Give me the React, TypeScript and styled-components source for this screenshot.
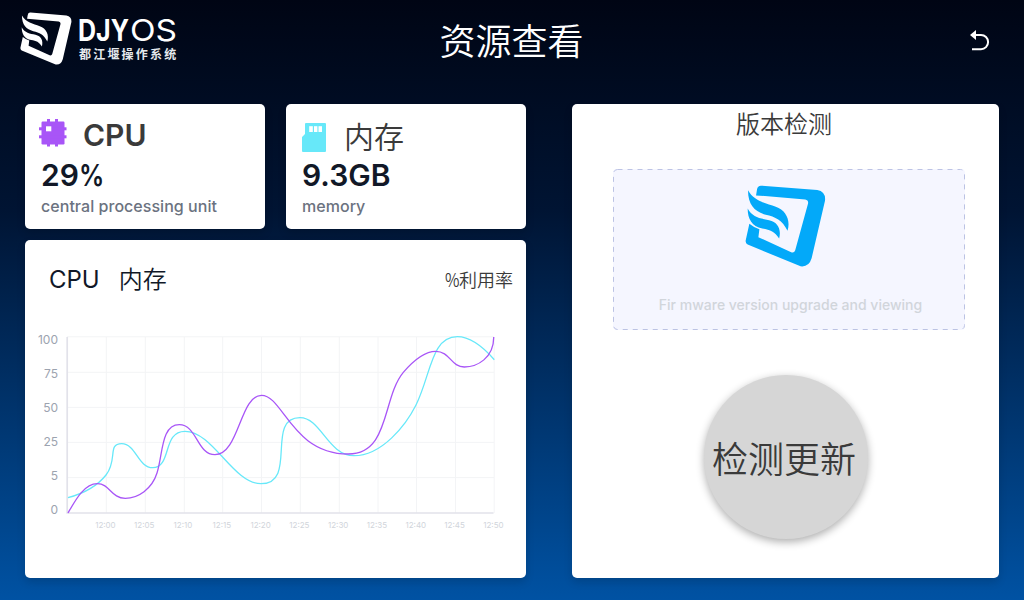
import React from "react";
import styled, { createGlobalStyle } from "styled-components";

const GlobalStyle = createGlobalStyle`
  * { box-sizing: border-box; }
  html, body { margin: 0; padding: 0; }
  body {
    width: 1024px;
    height: 600px;
    overflow: hidden;
    font-family: Inter, "Noto Sans CJK SC", sans-serif;
  }
`;

const Screen = styled.div`
  display: flex;
  flex-direction: column;
  width: 1024px;
  height: 600px;
  padding: 0 25px 22px;
  background: linear-gradient(180deg, #000514 0%, #001433 35%, #0052a3 100%);
`;

const Header = styled.header`
  display: grid;
  grid-template-columns: 1fr auto 1fr;
  align-items: start;
  height: 104px;
  flex: none;
`;

const Brand = styled.div`
  display: flex;
  align-items: flex-start;
  gap: 7px;
  margin-left: -5px;
  padding-top: 12px;
`;

const BrandText = styled.div`
  display: flex;
  flex-direction: column;
`;

const Wordmark = styled.svg`
  display: block;
  overflow: visible;
`;

const BrandSub = styled.span`
  margin-top: 2px;
  font: 700 12px/16px "Noto Sans CJK SC", sans-serif;
  letter-spacing: 2.2px;
  color: #e6e9ee;
  white-space: nowrap;
`;

const Title = styled.h1`
  margin: 0 1px 0 0;
  padding-top: 13px;
  font: 350 36px/52px "Noto Sans CJK SC", sans-serif;
  color: #fff;
`;

const BackButton = styled.button`
  justify-self: end;
  display: flex;
  margin: 28px 8px 0 0;
  padding: 0;
  border: 0;
  background: none;
`;

const Content = styled.main`
  display: flex;
  flex: 1;
  gap: 46px;
`;

const LeftColumn = styled.div`
  display: flex;
  flex-direction: column;
  gap: 11px;
  width: 501px;
`;

const StatRow = styled.div`
  display: flex;
  gap: 21px;
`;

const Card = styled.section`
  background: #fff;
  border-radius: 5px;
  box-shadow: 0 4px 8px rgba(0, 0, 0, 0.14);
`;

const StatCard = styled(Card)`
  width: 240px;
  height: 125px;
  padding: 13px 0 0 16px;
`;

const StatHead = styled.div<{ $gap: number; $shift: number }>`
  display: flex;
  align-items: flex-start;
  gap: ${(p) => p.$gap}px;
  height: 40px;
  margin-left: ${(p) => p.$shift}px;
`;

const StatIcon = styled.span<{ $top: number }>`
  display: flex;
  margin-top: ${(p) => p.$top}px;
`;

const StatName = styled.h2<{ $cjk?: boolean }>`
  margin: 0;
  font-size: 30px;
  line-height: ${(p) => (p.$cjk ? 40 : 36)}px;
  font-weight: ${(p) => (p.$cjk ? 350 : 600)};
  color: #3a3a3a;
`;

const StatValue = styled.div`
  font-size: 30px;
  line-height: 36px;
  font-weight: 600;
  color: #111827;
`;

const Percent = styled.span<{ $scale: number; $width: number }>`
  display: inline-block;
  width: ${(p) => p.$width}px;
  transform: scaleX(${(p) => p.$scale});
  transform-origin: left;
`;

const StatNote = styled.div`
  margin-top: 3px;
  font-size: 16px;
  line-height: 20px;
  font-weight: 500;
  letter-spacing: 0.04px;
  color: #6b7280;
`;

const ChartCard = styled(Card)`
  flex: 1;
  display: flex;
  flex-direction: column;
`;

const ChartHead = styled.div`
  display: flex;
  align-items: center;
  justify-content: space-between;
  height: 80px;
  padding: 0 13px 0 24px;
`;

const Legend = styled.div`
  display: flex;
  align-items: center;
  gap: 19px;
  font-size: 24px;
  line-height: 36px;
  color: #111827;
`;

const LegendCjk = styled.span`
  font-weight: 350;
  margin-top: -1px;
`;

const Unit = styled.span`
  margin-top: -3px;
  font: 350 18px/26px "Noto Sans CJK SC", sans-serif;
  color: #3a3a3a;
`;

const PlotRow = styled.div`
  display: flex;
  margin-top: 12px;
`;

const YAxis = styled.div`
  width: 33px;
  text-align: right;
  font-size: 12px;
  line-height: 34px;
  color: #9ca3af;
  margin: -9px 8px 0 0;
`;

const XAxis = styled.div`
  display: grid;
  grid-template-columns: repeat(11, 38.8px);
  margin: -7px 0 0 61px;
  font-size: 8px;
  line-height: 10px;
  text-align: center;
  color: #d1d5db;
`;

const VersionCard = styled(Card)`
  display: flex;
  flex-direction: column;
  align-items: center;
  width: 427px;
`;

const VersionTitle = styled.h2`
  margin: 1px 3px 0 0;
  font: 350 24px/36px "Noto Sans CJK SC", sans-serif;
  color: #3a3a3a;
`;

const DropZone = styled.div`
  position: relative;
  display: flex;
  flex-direction: column;
  align-items: center;
  width: 352px;
  height: 161px;
  margin: 28px 0 0 7px;
  padding: 16px 7px 0 0;
  border-radius: 4px;
  background: #f5f6ff;
`;

const Dashes = styled.svg`
  position: absolute;
  inset: 0;
`;

const DropText = styled.p`
  margin: 28px 0 0 10px;
  font-size: 14px;
  line-height: 20px;
  font-weight: 500;
  color: #d1d5db;
  white-space: nowrap;
`;

const UpdateButton = styled.button`
  width: 164px;
  height: 164px;
  margin: 45px 0 0 1px;
  padding: 0 4px 0 0;
  border: 0;
  border-radius: 50%;
  background: #d6d6d6;
  box-shadow: 0 3px 8px rgba(0, 0, 0, 0.32);
  font: 350 36px/52px "Noto Sans CJK SC", sans-serif;
  color: #3a3a3a;
  white-space: nowrap;
`;

const LogoMark = ({ width, height, color }: { width: number; height: number; color: string }) => (
  <svg width={width} height={height} viewBox="46 47 242 245" fill={color}>
    <path d="M79 78 L82 60 Q84 48 95 49 L262 62 Q288 67 285 94 L245 266 Q237 293 212 290 L54 225 Q47 221 48 213 L59 163 Q72 174 89 179 L86 203 L184 248 Q193 251 196 242 L234 104 Q237 92 226 90 Z" />
    <path d="M55 63 C72 95 108 102 138 112 C168 122 183 152 173 184 C158 152 136 142 108 136 C76 127 55 108 55 63 Z" />
    <path d="M54 117 C68 143 92 147 118 152 C145 158 155 180 148 207 C135 186 122 181 98 177 C66 170 54 148 54 117 Z" />
  </svg>
);

const BrandName = () => (
  <Wordmark width="98" height="32" viewBox="0 0 98 32" fill="#fff">
    <text x="-1" y="29" fontFamily="Inter" fontWeight="700" fontSize="30" textLength="51" lengthAdjust="spacingAndGlyphs">DJY</text>
    <text x="51" y="29" fontFamily="Inter" fontWeight="400" fontSize="30" textLength="47" lengthAdjust="spacingAndGlyphs">OS</text>
  </Wordmark>
);

const CpuIcon = () => (
  <svg width="28" height="28" viewBox="0 0 28 28">
    <g fill="#a855f7">
      <rect x="2.5" y="2.5" width="23" height="23" rx="1.2" />
      <rect x="8" y="0" width="3" height="27.5" />
      <rect x="16" y="0" width="3" height="27.5" />
      <rect x="0" y="8.3" width="27.5" height="3" />
      <rect x="0" y="16.3" width="27.5" height="3" />
    </g>
    <rect x="7" y="7.3" width="5.3" height="5" fill="#fff" />
  </svg>
);

const MemoryIcon = () => (
  <svg width="24" height="29" viewBox="0 0 24 29">
    <path fill="#67e8f9" d="M4 0 H23 Q24 0 24 1 V28 Q24 29 23 29 H1 Q0 29 0 28 V14 L3 11 V1 Q3 0 4 0 Z" />
    <g fill="#fff">
      <rect x="7.2" y="3.2" width="3.6" height="5.8" />
      <rect x="12" y="3.2" width="3.4" height="5.8" />
      <rect x="16.5" y="3.2" width="3.5" height="5.8" />
    </g>
  </svg>
);

const BackIcon = () => (
  <svg width="22" height="24" viewBox="969 28 22 24">
    <path d="M972 49.2 H981 A7.1 7.1 0 0 0 981 35 H974" fill="none" stroke="#fff" strokeWidth="2" />
    <path d="M970 35 L976 30 V40 Z" fill="#fff" />
  </svg>
);

const columns = [106.3, 145.3, 184.3, 222.7, 261.5, 300.3, 339.3, 378, 416.5, 455.5, 494.2];
const rows = [336.8, 372.3, 407.4, 442.4, 477.6];

const Plot = () => (
  <svg width="432" height="188" viewBox="66 332 432 188" fill="none">
    <g stroke="#f3f4f6" strokeWidth="1">
      {columns.map((x) => (
        <path key={x} d={`M${x} 337 V513`} />
      ))}
      {rows.map((y) => (
        <path key={y} d={`M67 ${y} H494`} />
      ))}
    </g>
    <path d="M67.2 337 V513 H493.5" stroke="#e2e2ea" strokeWidth="1.7" />
    <path
      stroke="#67e8f9"
      strokeWidth="1.3"
      d="M68 497.7 C76 495.5 95 489 106 475 C118 460 107 443.7 121.7 443.7 C136 443.7 138 467.7 152.7 467.7 C172 467.7 162 431.3 185 431.3 C213 431.3 233 483.7 261 483.7 C298 483.7 265 417.7 300 417.7 C321 417.7 328 455.7 354 455.7 C382 455.7 406 425 416 405 C431 375 431 336.7 457.3 336.7 C471 336.7 484 348 494.3 359.7"
    />
    <path
      stroke="#a855f7"
      strokeWidth="1.3"
      d="M68 513 C75 501 84 483.7 97.3 483.7 C110 483.7 111 498.3 125.3 498.3 C138 498.3 152 489 157 473 C163 454 161 424.7 179.3 424.7 C197 424.7 197 454.7 215 454.7 C239 454.7 240 395.3 261.5 395.3 C283 395.3 292 454 348.3 454 C390 454 382 398 403.3 372.3 C413 361 424 351.3 435.7 351.3 C450 351.3 451 367 464.3 367 C477 367 494 358 493.7 337"
    />
  </svg>
);

const yLabels = ["100", "75", "50", "25", "5", "0"];
const xLabels = ["12:00", "12:05", "12:10", "12:15", "12:20", "12:25", "12:30", "12:35", "12:40", "12:45", "12:50"];

export default function App() {
  return (
    <>
      <GlobalStyle />
      <Screen>
        <Header>
          <Brand>
            <LogoMark width={52} height={53} color="#fff" />
            <BrandText>
              <BrandName />
              <BrandSub>都江堰操作系统</BrandSub>
            </BrandText>
          </Brand>
          <Title>资源查看</Title>
          <BackButton aria-label="返回">
            <BackIcon />
          </BackButton>
        </Header>
        <Content>
          <LeftColumn>
            <StatRow>
              <StatCard>
                <StatHead $gap={16} $shift={-2}>
                  <StatIcon $top={1.5}>
                    <CpuIcon />
                  </StatIcon>
                  <StatName>CPU</StatName>
                </StatHead>
                <StatValue>
                  29
                  <Percent $scale={0.84} $width={24}>%</Percent>
                </StatValue>
                <StatNote>central processing unit</StatNote>
              </StatCard>
              <StatCard>
                <StatHead $gap={18} $shift={0}>
                  <StatIcon $top={6}>
                    <MemoryIcon />
                  </StatIcon>
                  <StatName $cjk>内存</StatName>
                </StatHead>
                <StatValue>9.3GB</StatValue>
                <StatNote>memory</StatNote>
              </StatCard>
            </StatRow>
            <ChartCard>
              <ChartHead>
                <Legend>
                  <span>CPU</span>
                  <LegendCjk>内存</LegendCjk>
                </Legend>
                <Unit>
                  <Percent $scale={0.88} $width={14.5}>%</Percent>
                  利用率
                </Unit>
              </ChartHead>
              <PlotRow>
                <YAxis>
                  {yLabels.map((label) => (
                    <div key={label}>{label}</div>
                  ))}
                </YAxis>
                <Plot />
              </PlotRow>
              <XAxis>
                {xLabels.map((label) => (
                  <span key={label}>{label}</span>
                ))}
              </XAxis>
            </ChartCard>
          </LeftColumn>
          <VersionCard>
            <VersionTitle>版本检测</VersionTitle>
            <DropZone>
              <Dashes width="352" height="161">
                <rect x="0.5" y="0.5" width="351" height="160" rx="4" fill="none" stroke="#bcc3e4" strokeDasharray="5 5" />
              </Dashes>
              <LogoMark width={81} height={82} color="#03a9f9" />
              <DropText>Fir mware version upgrade and viewing</DropText>
            </DropZone>
            <UpdateButton>检测更新</UpdateButton>
          </VersionCard>
        </Content>
      </Screen>
    </>
  );
}
